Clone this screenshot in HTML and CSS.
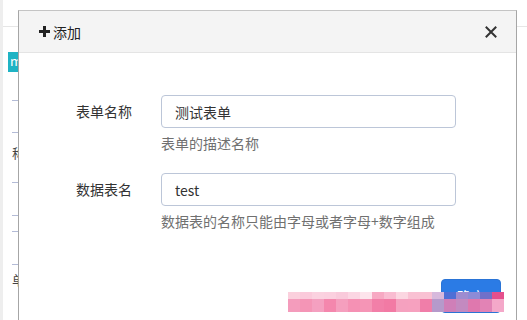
FILE: index.html
```html
<!DOCTYPE html>
<html lang="zh-CN">
<head>
  <meta charset="UTF-8">
  <meta name="viewport" content="width=device-width, initial-scale=1.0">
  <title>添加</title>
  <link rel="stylesheet" href="styles.css">
</head>
<body>
  <div class="page">
    <div class="topbar"></div>
    <div class="sheet">
      <div class="row r2"><span class="tag">m</span></div>
      <div class="row r3"></div>
      <div class="row r4"><span class="cell">称</span></div>
      <div class="row r5"></div>
      <div class="row r6"></div>
      <div class="row r7"></div>
      <div class="row r8"><span class="cell">单</span></div>
    </div>
  </div>

  <div class="modal">
    <div class="modal-header">
      <div class="modal-title">
        <svg class="plus" width="11" height="11" viewBox="0 0 11 11"><path d="M4 0h3v4h4v3H7v4H4V7H0V4h4z" fill="#222"/></svg>
        <span>添加</span>
      </div>
      <svg class="close" width="12" height="12" viewBox="0 0 12 12"><path d="M1.5 1.5l9 9M10.5 1.5l-9 9" stroke="#333" stroke-width="2" stroke-linecap="square"/></svg>
    </div>
    <div class="modal-body">
      <div class="form-row">
        <label class="form-label" for="nome">表单名称</label>
        <div class="form-field">
          <input type="text" id="nome" value="测试表单">
          <div class="help">表单的描述名称</div>
        </div>
      </div>
      <div class="form-row">
        <label class="form-label" for="tabela">数据表名</label>
        <div class="form-field">
          <input type="text" id="tabela" value="test">
          <div class="help">数据表的名称只能由字母或者字母+数字组成</div>
        </div>
      </div>
    </div>
    <div class="modal-footer">
      <button>确定</button>
    </div>
  </div>

  <div class="mosaic">
    <div class="mrow top">
      <i style="background:#fbd0dd"></i><i style="background:#fbcadb"></i><i style="background:#fbd2e0"></i><i style="background:#fbd0df"></i><i style="background:#f9cadb"></i><i style="background:#fbd6e3"></i><i style="background:#fde4ec"></i><i style="background:#f7a9c3"></i><i style="background:#f9bcd1"></i><i style="background:#fbd6e1"></i><i style="background:#f9c1d3"></i><i style="background:#f9c1d3"></i><i style="background:#d7b9dc"></i><i style="background:#4e6fd6"></i><i style="background:#9e8cd0"></i><i style="background:#8d8bd6"></i><i style="background:#7070c9"></i><i style="background:#e4508d"></i>
    </div>
    <div class="mrow bottom">
      <i style="background:#f49cbc"></i><i style="background:#f495b6"></i><i style="background:#f4a0c0"></i><i style="background:#f487ad"></i><i style="background:#f59fbe"></i><i style="background:#f591b4"></i><i style="background:#f595b6"></i><i style="background:#f27fa8"></i><i style="background:#f27aa4"></i><i style="background:#f5a1bf"></i><i style="background:#f6a1bf"></i><i style="background:#f07ea9"></i><i style="background:#b59acb"></i><i style="background:#cf7fb8"></i><i style="background:#c38ac0"></i><i style="background:#df78ae"></i><i style="background:#e283b5"></i><i style="background:#f4a8c9"></i>
    </div>
  </div>
</body>
</html>
```

FILE: styles.css
```css
* {
  box-sizing: border-box;
}
html, body {
  height: 100%;
}
body {
  margin: 0;
  font-family: "Noto Sans CJK SC", "Noto Sans", sans-serif;
  font-size: 14px;
  color: #333;
  background-color: #fff;
  overflow: hidden;
}
.page {
  height: 100%;
  overflow: hidden;
  border-left: 3px solid #eeeeee;
}
.topbar {
  height: 27px;
  border-bottom: 1px solid #e6e6e6;
}
.sheet {
  width: 15px;
  padding-left: 9px;
}
.row {
  border-top: 1px solid #b3bbd6;
}
.r2 {
  height: 73px;
  padding-top: 25px;
  border-top: none;
}
.r3 {
  height: 32px;
}
.r4 {
  height: 50px;
  padding-top: 10px;
}
.r5 {
  height: 33px;
}
.r6 {
  height: 16px;
}
.r7 {
  height: 33px;
}
.r8 {
  height: 56px;
  padding-top: 5px;
}
.tag {
  display: block;
  margin-left: -4px;
  width: 10px;
  height: 20px;
  background-color: #1fb3c4;
  color: #fff;
  font-size: 13px;
  line-height: 18px;
  padding-left: 2px;
  overflow: hidden;
}
.cell {
  display: block;
  font-size: 13px;
  line-height: 20px;
  color: #444;
}

/* janela do modal */
.modal {
  position: absolute;
  left: 18px;
  top: 10px;
  width: 499px;
  bottom: -1px;
  background-color: #fff;
  border: 1px solid #a6a6a6;
  border-top-color: #c4c4c4;
}
.modal-header {
  height: 42px;
  display: flex;
  align-items: center;
  justify-content: space-between;
  padding: 0 19px 0 20px;
  background-color: #f4f4f4;
  border-bottom: 1px solid #e4e4e4;
}
.modal-title {
  display: flex;
  align-items: center;
  gap: 3px;
  font-size: 14px;
  color: #222;
}
.modal-body {
  padding: 42px 0 0 57px;
}
.form-row {
  display: flex;
  align-items: flex-start;
  margin-bottom: 19px;
}
.form-label {
  width: 85px;
  line-height: 33px;
  color: #333;
}
.form-field {
  width: 295px;
}
input {
  width: 100%;
  height: 33px;
  padding: 0 13px;
  font-family: inherit;
  font-size: 14px;
  color: #333;
  border: 1px solid #bcc6d8;
  border-radius: 4px;
  outline: none;
}
.help {
  margin-top: 4px;
  line-height: 22px;
  color: #707070;
}
.modal-footer {
  display: flex;
  justify-content: flex-end;
  padding: 28px 15px 0 0;
}
button {
  width: 60px;
  height: 34px;
  font-family: inherit;
  font-size: 14px;
  color: #fff;
  background-color: #2b7be5;
  border: 1px solid #2a74d6;
  border-radius: 4px;
  cursor: pointer;
}

/* marca d'agua pixelada */
.mosaic {
  position: absolute;
  left: 288px;
  top: 292px;
}
.mrow {
  display: flex;
}
.mrow i {
  display: block;
  width: 12px;
}
.mrow.top i {
  height: 7px;
}
.mrow.bottom i {
  height: 13px;
}
```
